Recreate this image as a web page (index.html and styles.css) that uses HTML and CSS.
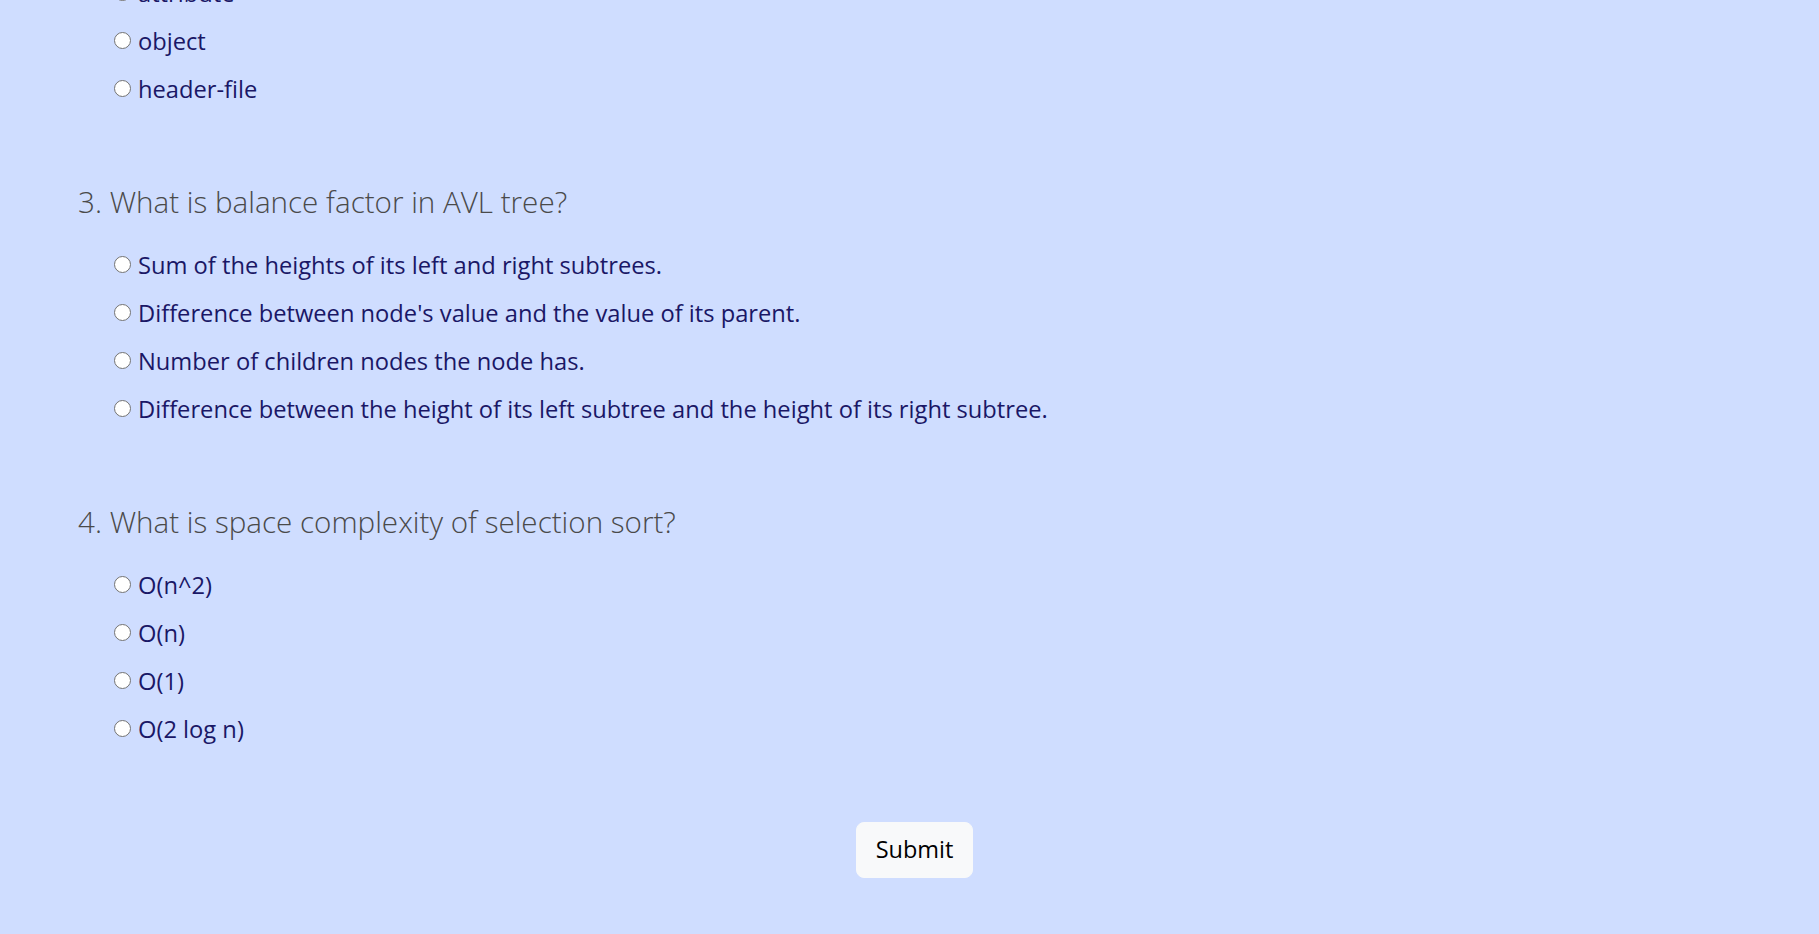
FILE: index.html
```html
<!DOCTYPE html>
<html lang="en">
<head>
<meta charset="utf-8">
<title>Quiz</title>
<link rel="stylesheet" href="styles.css">
</head>
<body>
<form class="quiz">
  <section class="question question-first">
    <ul class="options">
      <li class="option"><input class="radio" type="radio" name="q2" id="q2a"><label for="q2a">attribute</label></li>
      <li class="option"><input class="radio" type="radio" name="q2" id="q2b"><label for="q2b">object</label></li>
      <li class="option"><input class="radio" type="radio" name="q2" id="q2c"><label for="q2c">header-file</label></li>
    </ul>
  </section>
  <section class="question">
    <h3 class="question-title">3. What is balance factor in AVL tree?</h3>
    <ul class="options">
      <li class="option"><input class="radio" type="radio" name="q3" id="q3a"><label for="q3a">Sum of the heights of its left and right subtrees.</label></li>
      <li class="option"><input class="radio" type="radio" name="q3" id="q3b"><label for="q3b">Difference between node's value and the value of its parent.</label></li>
      <li class="option"><input class="radio" type="radio" name="q3" id="q3c"><label for="q3c">Number of children nodes the node has.</label></li>
      <li class="option"><input class="radio" type="radio" name="q3" id="q3d"><label for="q3d">Difference between the height of its left subtree and the height of its right subtree.</label></li>
    </ul>
  </section>
  <section class="question">
    <h3 class="question-title">4. What is space complexity of selection sort?</h3>
    <ul class="options">
      <li class="option"><input class="radio" type="radio" name="q4" id="q4a"><label for="q4a">O(n^2)</label></li>
      <li class="option"><input class="radio" type="radio" name="q4" id="q4b"><label for="q4b">O(n)</label></li>
      <li class="option"><input class="radio" type="radio" name="q4" id="q4c"><label for="q4c">O(1)</label></li>
      <li class="option"><input class="radio" type="radio" name="q4" id="q4d"><label for="q4d">O(2 log n)</label></li>
    </ul>
  </section>
  <div class="actions">
    <button class="submit-btn" type="button">Submit</button>
  </div>
</form>
</body>
</html>
```

FILE: styles.css
```css
html, body {
  margin: 0;
  padding: 0;
}

body {
  background: #cfddff;
  font-family: "Open Sans", "Noto Sans", sans-serif;
  height: 934px;
  overflow: hidden;
}

.quiz {
  padding-left: 78px;
}

.question-first {
  margin-top: -32px;
}

.question-title {
  margin: 70px 0 18px;
  height: 40px;
  line-height: 40px;
  font-size: 29.6px;
  font-weight: 300;
  color: #4a4a4a;
  white-space: nowrap;
}

.options {
  list-style: none;
  margin: 0;
  padding: 0 0 0 36px;
}

.option {
  display: flex;
  align-items: center;
  height: 48px;
  gap: 7px;
  font-size: 23.7px;
  color: #1a1766;
}

.option label {
  padding-top: 2px;
  line-height: 30px;
  white-space: nowrap;
}

.radio {
  appearance: none;
  -webkit-appearance: none;
  box-sizing: border-box;
  margin: 0;
  width: 17px;
  height: 17px;
  border: 1.5px solid #737373;
  border-radius: 50%;
  background: #ffffff;
  flex-shrink: 0;
}

.actions {
  display: flex;
  justify-content: center;
  margin-left: -78px;
  padding: 70px 0 0 10px;
}

.submit-btn {
  height: 56px;
  padding: 0 19px 2px;
  border: 1px solid #f8f9fa;
  border-radius: 8px;
  background: #f8f9fa;
  color: #000000;
  font-family: "Open Sans", "Noto Sans", sans-serif;
  font-size: 23.5px;
}
```
